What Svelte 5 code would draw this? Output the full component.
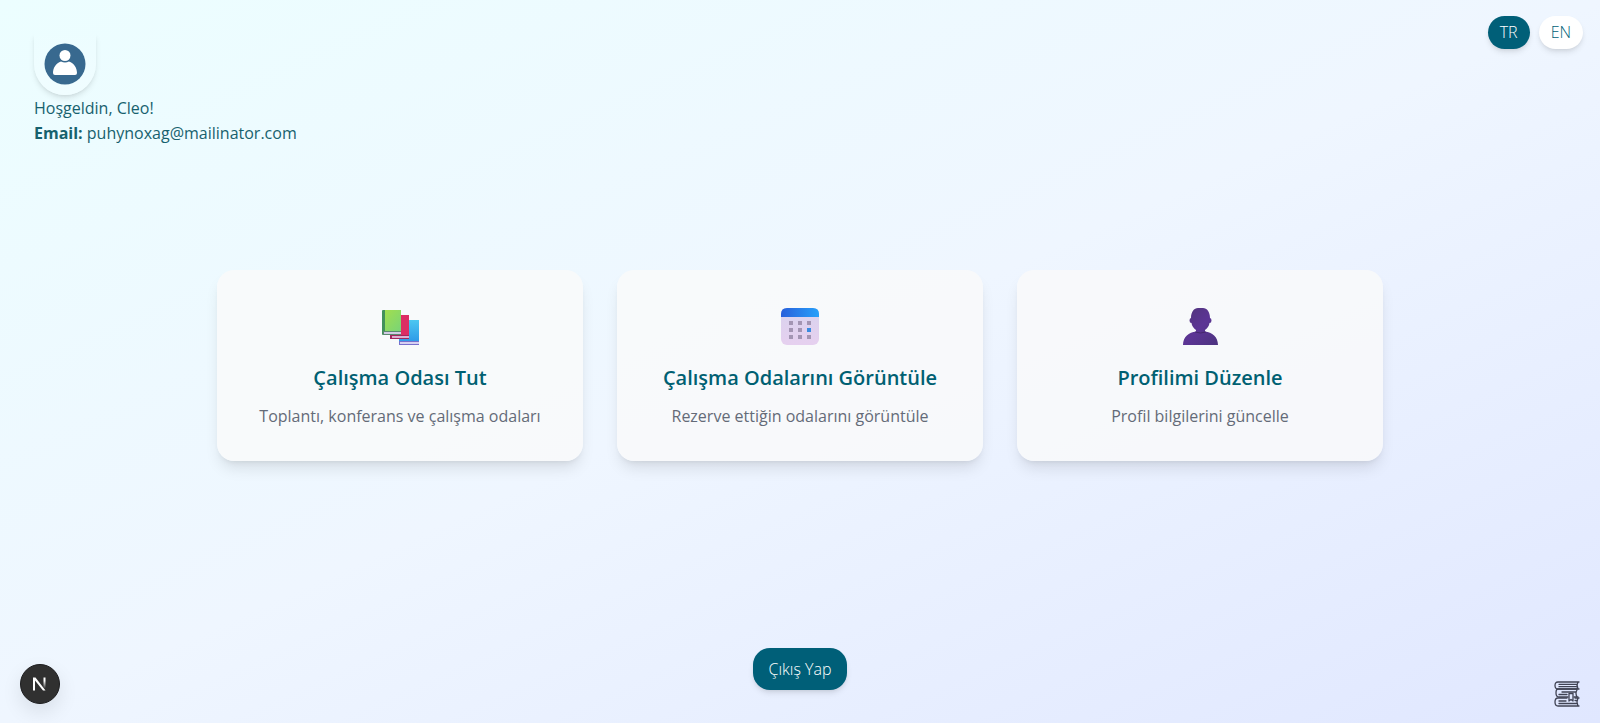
<script>
  let lang = $state('TR');
  const languages = ['TR', 'EN'];
  const cards = [
    { icon: 'books', title: 'Çalışma Odası Tut', text: 'Toplantı, konferans ve çalışma odaları' },
    { icon: 'calendar', title: 'Çalışma Odalarını Görüntüle', text: 'Rezerve ettiğin odalarını görüntüle' },
    { icon: 'person', title: 'Profilimi Düzenle', text: 'Profil bilgilerini güncelle' }
  ];
</script>

<div class="page">
  <header>
    <div class="user">
      <button class="avatar" aria-label="Profil">
        <svg width="42" height="42" viewBox="0 0 42 42" aria-hidden="true">
          <circle cx="21" cy="21" r="20.5" fill="#38698f" />
          <circle cx="21" cy="12.5" r="5.5" fill="#fff" />
          <path d="M17 18.500Q21 20.500 25 18.500C30 20 33 25 33 30Q33 32 31 32H11Q9 32 9 30C9 25 12 20 17 18.500Z" fill="#fff" />
        </svg>
      </button>
      <p>Hoşgeldin, Cleo!</p>
      <p><strong>Email:</strong> puhynoxag@mailinator.com</p>
    </div>
    <div class="languages">
      {#each languages as code}
        <button class:active={lang === code} onclick={() => (lang = code)}>{code}</button>
      {/each}
    </div>
  </header>

  <main>
    {#each cards as card}
      <a class="card" href="#{card.icon}">
        <svg class="icon" viewBox="0 0 40 40" aria-hidden="true">
          {#if card.icon === 'books'}
            <defs>
              <linearGradient id="green" x1="0" y1="0" x2="1" y2="1"><stop stop-color="#a4df4c" /><stop offset="1" stop-color="#79d477" /></linearGradient>
              <linearGradient id="blue" x1="0" y1="0" x2="0" y2="1"><stop stop-color="#4cc7f1" /><stop offset="1" stop-color="#2f9be8" /></linearGradient>
            </defs>
            <path d="M19 12h20v21H19z" fill="url(#blue)" />
            <path d="M19 33h20v4H19z" fill="#7770cc" /><path d="M20 34h19v2H20z" fill="#d7d0f2" />
            <path d="M10 7h19v21H10z" fill="#dc2e63" />
            <path d="M10 27h19v4H10z" fill="#a3275d" /><path d="M12 28h17v2H12z" fill="#dcb0d0" />
            <path d="M3 2h18v21H3z" fill="url(#green)" />
            <path d="M2 3Q2 2 3 2H5V27H3Q2 27 2 26z" fill="#42915b" /><path d="M3 23h18v4H3z" fill="#5b8870" /><path d="M4 24h17v2H4z" fill="#d2cbe4" />
          {:else if card.icon === 'calendar'}
            <defs>
              <linearGradient id="bar"><stop stop-color="#285fdb" /><stop offset="1" stop-color="#27a0fa" /></linearGradient>
              <linearGradient id="sheet" x1="0" y1="0" x2="0" y2="1"><stop stop-color="#d8d3ee" /><stop offset="1" stop-color="#e6d0ef" /></linearGradient>
            </defs>
            <rect x="1" width="38" height="37" rx="6" fill="url(#sheet)" />
            <path d="M1 9V6Q1 0 7 0H33Q39 0 39 6V9Z" fill="url(#bar)" />
            <path d="M9 13h4v4H9zM18 13h4v4h-4zM27 13h4v4h-4zM9 20h4v4H9zM18 20h4v4h-4zM9 27h4v4H9zM18 27h4v4h-4zM27 27h4v4h-4z" fill="#a395b3" />
            <path d="M27 20h4v4h-4z" fill="#398be0" />
          {:else}
            <defs>
              <linearGradient id="torso" x1="0" y1="0" x2="1" y2="1"><stop stop-color="#503578" /><stop offset=".5" stop-color="#5c3595" /><stop offset="1" stop-color="#4c337f" /></linearGradient>
            </defs>
            <path d="M3 37C3 29 9 24 16 23.500V22Q12 19 11.500 15Q9.500 15 9.500 12.500Q9.500 10 11 10C11 4 14 0 18 0H23C27 0 30 4 30 10Q31.500 10 31.500 12.500Q31.500 15 29.500 15Q29 19 25 22V23.500C32 24 38 29 38 37Z" fill="url(#torso)" />
            <path d="M15 24Q20.500 26 26 24" fill="none" stroke="#45286c" />
          {/if}
        </svg>
        <h2>{card.title}</h2>
        <p>{card.text}</p>
      </a>
    {/each}
  </main>

  <footer><button>Çıkış Yap</button></footer>

  <button class="dev" aria-label="Next.js">
    <svg width="40" height="40" viewBox="0 0 40 40" aria-hidden="true">
      <defs><linearGradient id="stem" x1="0" y1="0" x2="0" y2="1"><stop offset=".3" stop-color="#fff" /><stop offset="1" stop-color="#fff" stop-opacity="0" /></linearGradient></defs>
      <circle cx="20" cy="20" r="19.500" fill="#303030" stroke="#1d1d1f" />
      <path d="M13 26.500V13.500H15.500L25.500 26.500H23L15 16.500V26.500Z" fill="#fff" />
      <path d="M23.500 13.500h2v11h-2z" fill="url(#stem)" />
    </svg>
  </button>
  <svg class="stack" viewBox="0 0 28 28" aria-hidden="true">
    <g fill="none" stroke="#404354" stroke-width="1.300" stroke-linecap="round" stroke-linejoin="round">
      <path d="M26 2H5Q2 2 2 5.500T5 9H26M25 2Q23 5.500 25 9M6 4.300H23M6 6.700H23" />
      <path d="M24 9H5Q3 9 3 13T6 17H15M21 17H25M24 10Q22 13 24 17M9 12H23M6 14.500H14" />
      <path d="M16 13.500H20V21L18 19.500L16 21Z" />
      <path d="M14 18H5Q2 18 2 22T5 26H26M22 18H26M25 18Q23 22 25 26M6 21H13M6 23.500H23M22 20.500H23" />
    </g>
  </svg>
</div>

<style>
  :global(body) { margin: 0; }
  .page {
    position: relative;
    box-sizing: border-box;
    min-height: 100vh;
    display: flex;
    flex-direction: column;
    padding: 16px 17px 33px;
    background: linear-gradient(to bottom right, #ecfeff, #eff6ff, #e0e7ff);
    color: #17616e;
    font-family: "Segoe UI", "Open Sans", "Noto Sans", sans-serif;
    font-size: 16px;
    line-height: 25px;
  }
  button { font: inherit; border: 0; cursor: pointer; }
  p, h2 { margin: 0; }
  header { display: flex; justify-content: space-between; align-items: flex-start; }
  .user { padding: 17px 0 0 17px; }
  .avatar {
    display: flex;
    padding: 10px;
    border-radius: 0 0 31px 31px;
    background: linear-gradient(#f0fdff00, #f0fdff);
    box-shadow: 0 4px 6px -1px #0000001a, 0 2px 4px -2px #0000001a;
    clip-path: inset(0 -10px -12px);
  }
  .avatar + p { margin-top: 1px; }
  .languages { display: flex; gap: 9px; }
  .languages button, footer button {
    font-weight: 300;
    box-shadow: 0 4px 6px -1px #0000001a, 0 2px 4px -2px #0000001a;
  }
  .languages button {
    padding: 4px 12px;
    border-radius: 17px;
    background: #fff;
    color: #005f78;
  }
  .languages .active, footer button { background: #005f78; color: #fff; }
  main {
    display: grid;
    grid-template-columns: repeat(3, 1fr);
    gap: 34px;
    width: 100%;
    max-width: 1166px;
    margin: 124px auto 0;
  }
  .card {
    display: flex;
    flex-direction: column;
    align-items: center;
    padding: 38px 34px 32px;
    border-radius: 17px;
    background: #fafafacc;
    box-shadow: 0 10px 15px -3px #0000001a, 0 4px 6px -4px #0000001a;
    color: inherit;
    text-align: center;
    text-decoration: none;
  }
  .icon { width: 40px; height: 40px; margin-bottom: 15px; }
  h2 { font-size: 20px; font-weight: 600; line-height: 29px; color: #006072; }
  .card p { margin-top: 12px; color: #646b78; }
  footer { display: flex; justify-content: center; margin-top: auto; }
  footer button { padding: 9px 16px 8px; border-radius: 17px; }
  .dev {
    position: absolute;
    left: 20px;
    bottom: 19px;
    display: flex;
    padding: 0;
    border-radius: 50%;
    background: none;
    box-shadow: 0 8px 20px #00000018;
  }
  .stack { position: absolute; right: 19px; bottom: 15px; width: 28px; height: 28px; }
  @media (max-width: 900px) {
    main { grid-template-columns: 1fr; margin: 40px auto; }
  }
</style>
